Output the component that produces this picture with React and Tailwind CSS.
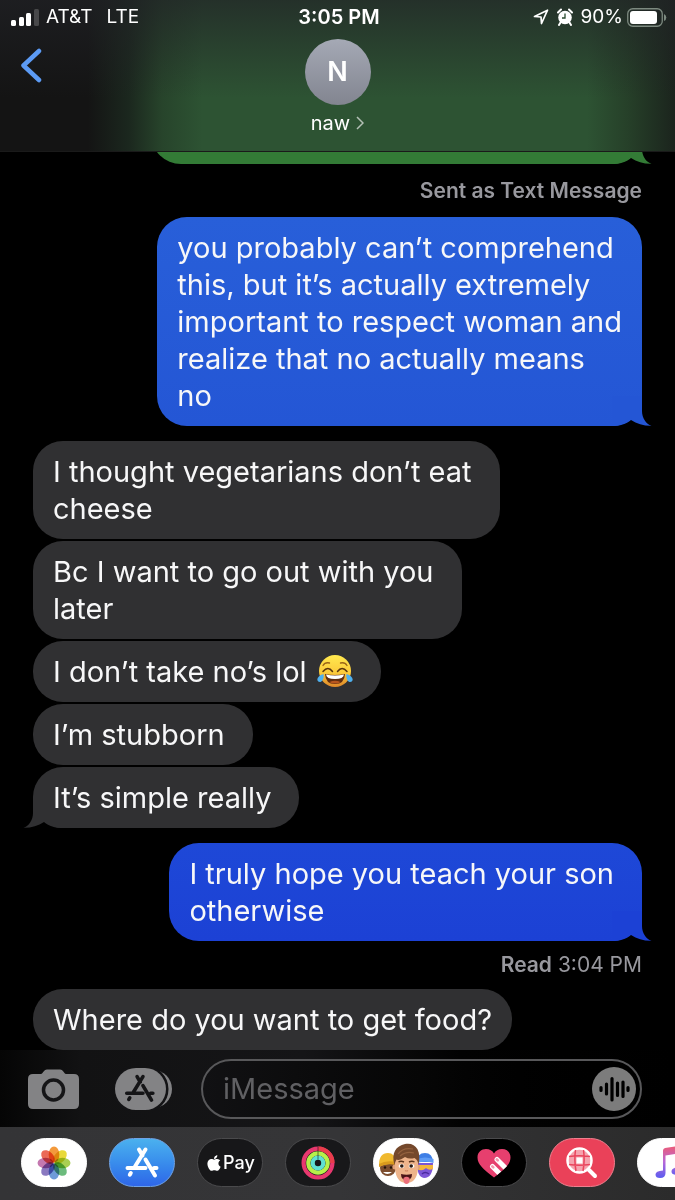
import React, { useState } from 'react';
import { FaApple } from 'react-icons/fa';

const messages = [
  { type: 'bubble', from: 'me', tone: 'green', tail: true, lines: [] },
  { type: 'note', strong: 'Sent as Text Message', gap: 'mt-[13px] mb-3' },
  {
    type: 'bubble',
    from: 'me',
    tone: 'blue',
    tail: true,
    lines: [
      'you probably can’t comprehend',
      'this, but it’s actually extremely',
      'important to respect woman and',
      'realize that no actually means',
      'no',
    ],
  },
  { type: 'bubble', from: 'them', gap: 'mt-[15px]', wide: true, lines: ['I thought vegetarians don’t eat', 'cheese'] },
  { type: 'bubble', from: 'them', gap: 'mt-[2px]', wide: true, lines: ['Bc I want to go out with you', 'later'] },
  { type: 'bubble', from: 'them', gap: 'mt-[2px]', wide: true, emoji: true, lines: ['I don’t take no’s lol'] },
  { type: 'bubble', from: 'them', gap: 'mt-[2px]', wide: true, lines: ['I’m stubborn'] },
  { type: 'bubble', from: 'them', gap: 'mt-[2px]', wide: true, tail: true, lines: ['It’s simple really'] },
  {
    type: 'bubble',
    from: 'me',
    tone: 'deep',
    gap: 'mt-[15px]',
    wide: true,
    tail: true,
    lines: ['I truly hope you teach your son', 'otherwise'],
  },
  { type: 'note', strong: 'Read', text: '3:04 PM', gap: 'my-[10px]' },
  { type: 'bubble', from: 'them', lines: ['Where do you want to get food?'] },
];

const tones = {
  green: 'bg-[#337b36] text-[#337b36]',
  blue: 'bg-linear-to-b from-[#285fd9] to-[#2456d5] text-[#2456d5]',
  deep: 'bg-linear-to-b from-[#1e48d7] to-[#1c41d5] text-[#1c41d5]',
  gray: 'bg-[#303032] text-[#303032]',
};

function Tail({ side }) {
  return (
    <svg
      viewBox="0 0 40 30"
      className={`absolute bottom-0 h-[30px] w-10 ${side === 'right' ? '-right-[10px]' : '-left-[10px] -scale-x-100'}`}
      fill="currentColor"
      aria-hidden="true"
    >
      <path d="M0 0H30V15C30 22 34 28 39.500 29.800C32 30 25 28 19 24C14 28 8 30 0 30Z" />
    </svg>
  );
}

function JoyEmoji() {
  return (
    <svg viewBox="0 0 36 34" className="ml-[10px] inline-block h-[34px] w-9 align-[-6px]" role="img" aria-label="face with tears of joy">
      <defs>
        <linearGradient id="joy" x1="0" y1="0" x2="0" y2="1">
          <stop offset="0" stopColor="#ffe94f" />
          <stop offset=".55" stopColor="#fccb3b" />
          <stop offset="1" stopColor="#dd8528" />
        </linearGradient>
      </defs>
      <circle cx="18" cy="17" r="16" fill="url(#joy)" />
      <path d="M6 11.500Q8 8 12.500 9M30 11.500Q28 8 23.500 9" stroke="#9a6417" strokeWidth="1.300" fill="none" strokeLinecap="round" />
      <path d="M6 17.500Q11 11.500 15.500 17.500M30 17.500Q25 11.500 20.500 17.500" stroke="#5a350d" strokeWidth="1.500" fill="none" strokeLinecap="round" />
      <path d="M8 20Q18 22 28 20Q27.500 30 18 30Q8.500 30 8 20Z" fill="#5f2d10" />
      <path d="M9 20.500Q18 22.300 27 20.500Q26.500 25 18 25Q9.500 25 9 20.500Z" fill="#fff" />
      <path d="M12.500 28Q18 25.500 23.500 28Q22 29.500 18 29.500Q14 29.500 12.500 28Z" fill="#b8561f" />
      <path d="M6.500 20C1 21.500-1 25.500 1.200 27.500C4.500 29.500 7.500 25 6.500 20ZM29.500 20C35 21.500 37 25.500 34.800 27.500C31.500 29.500 28.500 25 29.500 20Z" fill="#4fb0ee" />
    </svg>
  );
}

function Bubble({ message }) {
  const mine = message.from === 'me';
  return (
    <div
      className={`relative min-h-[61px] shrink-0 rounded-[30px] py-3 pl-5 ${message.wide ? 'pr-7' : 'pr-5'} ${
        mine ? 'self-end' : 'self-start'
      } ${message.gap || ''} ${message.lines.length ? '' : 'w-full max-w-[491px]'} ${tones[mine ? message.tone : 'gray']}`}
    >
      {message.tail && <Tail side={mine ? 'right' : 'left'} />}
      {message.lines.length > 0 && (
        <p className="relative text-[29px] leading-[37px] whitespace-nowrap text-[#f7f7f8]">
          {message.lines.map((line, i) => (
            <React.Fragment key={line}>
              {i > 0 && <br />}
              {line}
            </React.Fragment>
          ))}
          {message.emoji && <JoyEmoji />}
        </p>
      )}
    </div>
  );
}

function StatusBar() {
  return (
    <div className="grid h-[34px] grid-cols-3 items-center pr-2 pl-[11px] text-[19px] leading-6">
      <div className="flex items-center">
        <svg viewBox="0 0 28 17" className="mr-[7px] h-[17px] w-7" aria-hidden="true">
          <rect x="0" y="11" width="5" height="6" rx="1.500" fill="#fff" />
          <rect x="8" y="8" width="5" height="9" rx="1.500" fill="#fff" />
          <rect x="15" y="4" width="5" height="13" rx="1.500" fill="#fff" />
          <rect x="23" y="0" width="5" height="17" rx="1.500" fill="#48484a" />
        </svg>
        <span className="mr-[14px]">AT&amp;T</span>
        <span>LTE</span>
      </div>
      <div className="text-center text-[20px] font-semibold">3:05 PM</div>
      <div className="flex items-center justify-end">
        <svg viewBox="0 0 16 16" className="mr-2 h-4 w-4" aria-hidden="true">
          <path d="M1.500 7.500L14.500 1.200L8.500 14.500L8 8Z" fill="none" stroke="#fff" strokeWidth="1.700" strokeLinejoin="round" />
        </svg>
        <svg viewBox="0 0 16 18" className="mr-2 h-[18px] w-4" aria-hidden="true">
          <circle cx="8" cy="9.500" r="6.800" fill="#fff" />
          <path d="M1 4.500L4 1.500M15 4.500L12 1.500M3.500 14.500L2 17M12.500 14.500L14 17" stroke="#fff" strokeWidth="2" strokeLinecap="round" />
          <path d="M8 5.500V10H5" stroke="#294a2e" strokeWidth="1.300" fill="none" />
        </svg>
        <span className="mr-1">90%</span>
        <svg viewBox="0 0 40 19" className="h-[19px] w-10" aria-hidden="true">
          <rect x=".75" y=".75" width="34.500" height="17.500" rx="5" fill="none" stroke="#7d8a80" strokeWidth="1.300" />
          <rect x="3" y="3" width="27" height="13" rx="3" fill="#fff" />
          <path d="M37 6Q39.300 7 39.300 9.500Q39.300 12 37 13Z" fill="#7d8a80" />
        </svg>
      </div>
    </div>
  );
}

function Header() {
  return (
    <header className="relative z-10 shrink-0 border-b border-white/10 bg-[linear-gradient(to_bottom,rgba(33,34,38,0.7),rgba(33,34,38,0)_65%),linear-gradient(to_right,#141414_13%,#1b271e_19%,#27442b_24%,#2d5333_30%,#2d5333_87%,#264029_93%,#1b241d_100%)] bg-clip-padding text-white">
      <StatusBar />
      <div className="grid grid-cols-3 items-start pt-[5px] pb-[14px]">
        <button type="button" aria-label="Back" className="mt-2 ml-5 w-6">
          <svg viewBox="0 0 24 36" className="h-9 w-6" fill="none" stroke="#5c9bf5" strokeWidth="4.500" strokeLinecap="round" strokeLinejoin="round">
            <path d="M19 4L3.500 18.500L19 33" />
          </svg>
        </button>
        <button type="button" className="flex flex-col items-center">
          <span className="flex size-[66px] items-center justify-center rounded-full bg-linear-to-b from-[#a5a9b5] to-[#828590] text-[27px] font-semibold">
            N
          </span>
          <span className="mt-1 flex items-center gap-[6px] text-[20px] leading-7">
            naw
            <svg viewBox="0 0 8 14" className="h-[14px] w-2" fill="none" stroke="#b4c0b6" strokeWidth="1.500" aria-hidden="true">
              <path d="M1 1L7 7L1 13" />
            </svg>
          </span>
        </button>
      </div>
    </header>
  );
}

function AppStoreGlyph() {
  return (
    <g fill="none" stroke="currentColor" strokeWidth="4" strokeLinecap="round">
      <path d="M14 3.500L17.500 9.500M20.500 3.500L10 20.500M5.800 27L4.800 28.700" />
      <path d="M20.500 13.500L30 29.500M2.500 22H20.500M29 22H31.500" />
    </g>
  );
}

function Composer() {
  const [draft, setDraft] = useState('');
  return (
    <form
      className="flex h-[77px] shrink-0 items-center bg-[linear-gradient(to_right,#050505,#121213_12%,#151517_45%,#020202_68%,#000)] pr-[33px] pl-7"
      onSubmit={(e) => e.preventDefault()}
    >
      <button type="button" aria-label="Camera" className="mr-9">
        <svg viewBox="0 0 51 40" className="h-10 w-[51px]">
          <path
            d="M5 5H13C15 5 15.500 0.500 19 0.500H32C35.500 0.500 36 5 38 5H46Q51 5 51 10V35Q51 40 46 40H5Q0 40 0 35V10Q0 5 5 5Z"
            fill="#838385"
          />
          <circle cx="25.500" cy="21" r="10" fill="none" stroke="#151517" strokeWidth="3.500" />
        </svg>
      </button>
      <button type="button" aria-label="Apps" className="mr-[29px]">
        <svg viewBox="0 0 57 42" className="h-[42px] w-[57px] text-[#151517]">
          <rect x="16" y="2" width="41" height="38" rx="19" fill="#838385" />
          <rect width="51" height="42" rx="21" fill="#838385" stroke="#131315" strokeWidth="5" />
          <rect width="51" height="42" rx="21" fill="#838385" />
          <g transform="translate(9.500 5.500) scale(.9)">
            <AppStoreGlyph />
          </g>
        </svg>
      </button>
      <div className="flex h-[60px] min-w-0 flex-1 items-center rounded-full border-2 border-[#58585a] bg-linear-to-r from-[#111113] via-[#060606] to-black pr-1">
        <input
          aria-label="Message"
          placeholder="iMessage"
          value={draft}
          onChange={(e) => setDraft(e.target.value)}
          className="min-w-0 flex-1 bg-transparent pl-5 text-[29px] leading-9 text-white outline-none placeholder:text-[#606063]"
        />
        <button type="button" aria-label="Record audio" className="shrink-0">
          <svg viewBox="0 0 44 44" className="size-11">
            <circle cx="22" cy="22" r="22" fill="#7c7c7c" />
            <path d="M9 20.500V23.500M14.500 17V27M20 11.500V33M25.500 16V28.500M31 15V29.500M36 20.500V23.500" stroke="#000" strokeWidth="3.200" strokeLinecap="round" />
          </svg>
        </button>
      </div>
    </form>
  );
}

const petals = ['#f39a3c', '#e8d93a', '#a9cf52', '#6cbb7d', '#6f9bd8', '#8a79c0', '#c478b0', '#ea6a58'];

function PhotosIcon() {
  return (
    <svg viewBox="0 0 36 36" className="size-9">
      {petals.map((color, i) => (
        <ellipse
          key={color}
          cx="18"
          cy="9.500"
          rx="5.300"
          ry="8"
          fill={color}
          transform={`rotate(${i * 45} 18 18)`}
          className="mix-blend-multiply"
        />
      ))}
    </svg>
  );
}

function ActivityIcon() {
  return (
    <svg viewBox="0 0 34 34" className="size-[34px]" fill="none" strokeWidth="4.200">
      <circle cx="17" cy="17" r="14.400" stroke="#e8386f" />
      <path d="M17 2.600A14.400 14.400 0 0 1 31.400 17" stroke="#ea3d4c" />
      <circle cx="17" cy="17" r="9.700" stroke="#b6f04a" />
      <circle cx="17" cy="17" r="5.300" stroke="#5fe0d2" />
      <path d="M17 .5V13.500" stroke="#18181a" strokeWidth="1" opacity=".6" />
    </svg>
  );
}

function MemojiIcon() {
  return (
    <svg viewBox="0 0 60 44" className="h-11 w-[60px] shrink-0">
      <circle cx="12" cy="27" r="8" fill="#7d4e2f" />
      <path d="M3 24Q3 12 12 12Q19 12 20 21L4 25Z" fill="#f0b92f" />
      <path d="M3 23Q10 19 20 21V24Q10 22 3 26Z" fill="#d99a1d" />
      <path d="M7 31Q11 35 16 31Q11 31 7 31Z" fill="#fff" />
      <circle cx="9" cy="26.500" r="1.200" fill="#21120a" />
      <circle cx="15" cy="26.500" r="1.200" fill="#21120a" />
      <path d="M41 22H57Q57 37 48 37Q41 36 41 22Z" fill="#7c55d6" />
      <path d="M41 21Q41 12 49 12Q56.500 12 57 21Z" fill="#3f7fe6" />
      <path d="M41 18Q49 15 57.500 18V22Q49 19 41 22Z" fill="#5f9cf5" />
      <path d="M41 24H57V28Q53 30 50 27Q46 31 41 28Z" fill="#f4b73c" />
      <path d="M46 33Q49 30 53 33" stroke="#4b2a9e" strokeWidth="1.500" fill="none" />
      <circle cx="19" cy="26" r="2.500" fill="#e0a07a" />
      <circle cx="41.500" cy="26" r="2.500" fill="#e0a07a" />
      <path d="M19 16H42V27Q41 42 30.500 42Q20 42 19 27Z" fill="#eeb48b" />
      <path d="M18.500 24C15 12 20 5 29 3C39 1 46 9 42.500 24Q42 19 38.500 17Q33 18.500 29 16Q23 20 20.500 18.500Q19 21 18.500 24Z" fill="#74482c" />
      <path d="M22 13Q27 6 37 8M24 15Q30 10 38 12" stroke="#94623f" strokeWidth="1.200" fill="none" />
      <path d="M22.500 21Q25 19.500 28 21M33 21Q36 19.500 38.500 21" stroke="#5b351d" strokeWidth="1.400" fill="none" />
      <ellipse cx="25.500" cy="25" rx="2.800" ry="2.100" fill="#fff" />
      <ellipse cx="35.500" cy="25" rx="2.800" ry="2.100" fill="#fff" />
      <circle cx="25.800" cy="25" r="1.800" fill="#2a1a12" />
      <circle cx="35.200" cy="25" r="1.800" fill="#2a1a12" />
      <path d="M29 29.500Q30.500 30.500 32 29.500" stroke="#cf8660" strokeWidth="1.200" fill="none" />
      <path d="M25 33Q30.500 34.500 36 33Q36 39 30.500 39Q25 39 25 33Z" fill="#4a1518" />
      <path d="M27.500 37Q30.500 34.500 33.500 37V39.500Q33 43 30.500 43Q28 43 27.500 39.500Z" fill="#ec6f7c" />
    </svg>
  );
}

function HeartIcon() {
  return (
    <svg viewBox="0 0 34 30" className="h-[30px] w-[34px]">
      <defs>
        <clipPath id="heart">
          <path d="M17 29.500C6 21 .5 16 .5 9.500C.5 4 4.500 1 9 1C12.500 1 15.500 2.700 17 5.500C18.500 2.700 21.500 1 25 1C29.500 1 33.500 4 33.500 9.500C33.500 16 28 21 17 29.500Z" />
        </clipPath>
      </defs>
      <g clipPath="url(#heart)" strokeLinecap="round">
        <path d="M0 0H34V30H0Z" fill="#e73f6e" />
        <path d="M15.500 18.500L28 31M20 11.500L34 25.500" stroke="#fff" strokeWidth="5" />
        <path d="M15.300 18.300L16.300 19.300M19.800 11.300L20.800 12.300" stroke="#f298ae" strokeWidth="2.600" />
      </g>
    </svg>
  );
}

function ImagesIcon() {
  return (
    <svg viewBox="0 0 32 32" className="size-8" fill="none">
      <circle cx="13.500" cy="13.500" r="12" fill="#f5a3ae" stroke="#fff" strokeWidth="2.500" />
      <path d="M10.500 10.500H16.500V16.500H10.500Z" fill="#fff" />
      <path d="M9.500 3Q8 13 10 24M17.500 3Q19 13 17 24M3 9.500Q13 8 24 9.500M3 17.500Q13 19 24 17.500" stroke="#e9445c" strokeWidth="1.500" />
      <path d="M22.500 22.500L29 29" stroke="#fff" strokeWidth="4" strokeLinecap="round" />
    </svg>
  );
}

function MusicIcon() {
  return (
    <svg viewBox="0 0 36 36" className="size-9">
      <defs>
        <linearGradient id="music" x1="0" y1="0" x2="0" y2="1">
          <stop offset="0" stopColor="#ee5a72" />
          <stop offset=".5" stopColor="#b868d8" />
          <stop offset="1" stopColor="#5a5cf0" />
        </linearGradient>
      </defs>
      <path
        d="M11 5.500Q11 3.500 13 3L31 .5V24.500Q31 29 25.500 30Q19.500 30 19.500 26.500Q19.500 22.500 28.500 22V8L13.500 10.500V28Q13.500 33 8 33Q3.500 33 3.500 29.500Q3.500 26 11 25.500Z"
        fill="url(#music)"
      />
    </svg>
  );
}

const apps = [
  { name: 'Photos', tone: 'bg-white border-white', icon: <PhotosIcon /> },
  {
    name: 'App Store',
    tone: 'bg-linear-to-b from-[#4bb1ee] to-[#2f66e8] border-[#6fa3e6]',
    icon: (
      <svg viewBox="0 0 34 34" className="size-[34px] text-white">
        <AppStoreGlyph />
      </svg>
    ),
  },
  {
    name: 'Apple Pay',
    tone: 'bg-[#171719] border-[#4a4a4c]',
    icon: (
      <span className="flex items-center text-[18px] font-medium text-white">
        <FaApple className="size-[18px]" />
        Pay
      </span>
    ),
  },
  { name: 'Activity', tone: 'bg-[#18181a] border-[#4a4a4c]', icon: <ActivityIcon /> },
  { name: 'Memoji', tone: 'bg-white border-white', icon: <MemojiIcon /> },
  { name: 'Digital Touch', tone: 'bg-black border-[#4a4a4c]', icon: <HeartIcon /> },
  { name: 'Images', tone: 'bg-[#ea4159] border-[#ee7f8e]', icon: <ImagesIcon /> },
  { name: 'Music', tone: 'bg-white border-white', icon: <MusicIcon /> },
];

function AppStrip() {
  return (
    <nav aria-label="iMessage apps" className="flex h-[73px] shrink-0 gap-[22px] overflow-hidden bg-linear-to-r from-[#343436] via-[#353537] to-[#2b2b2b] pt-[11px] pl-[21px]">
      {apps.map((app) => (
        <button
          key={app.name}
          type="button"
          aria-label={app.name}
          className={`flex h-[49px] w-[66px] shrink-0 items-center justify-center rounded-full border ${app.tone}`}
        >
          {app.icon}
        </button>
      ))}
    </nav>
  );
}

export default function App() {
  return (
    <div className="flex h-screen flex-col overflow-hidden bg-black font-['Inter',sans-serif]">
      <Header />
      <main className="flex min-h-0 flex-1 flex-col justify-end overflow-hidden px-[33px]">
        {messages.map((message, i) =>
          message.type === 'note' ? (
            <p key={i} className={`shrink-0 self-end text-[21px] leading-7 text-[#98989e] ${message.gap}`}>
              <span className="font-semibold">{message.strong}</span> {message.text}
            </p>
          ) : (
            <Bubble key={i} message={message} />
          )
        )}
      </main>
      <Composer />
      <AppStrip />
    </div>
  );
}
